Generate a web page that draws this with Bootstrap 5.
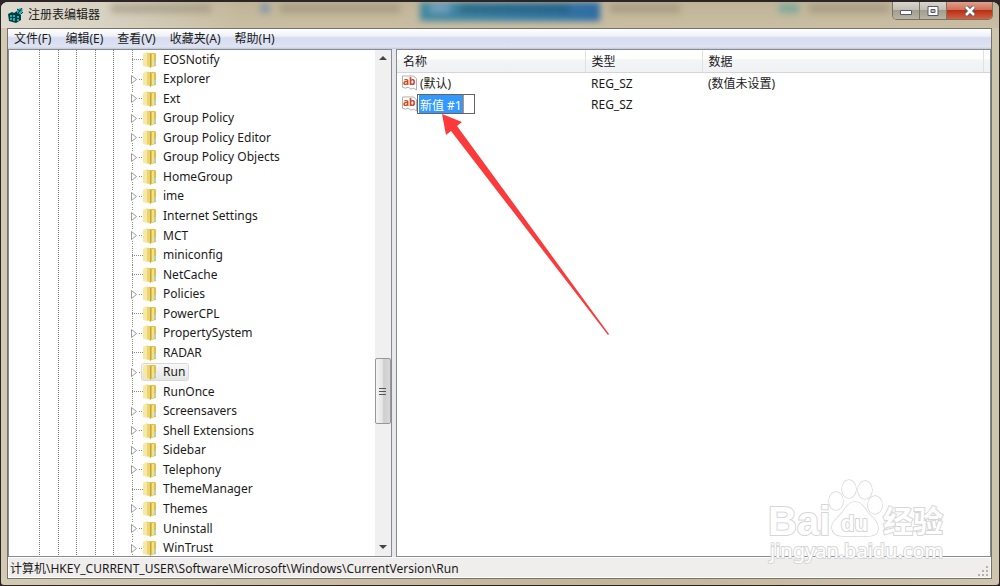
<!DOCTYPE html>
<html lang="zh-CN">
<head>
<meta charset="utf-8">
<meta name="viewport" content="width=device-width, initial-scale=1">
<title>注册表编辑器</title>
<link rel="stylesheet" href="https://cdn.jsdelivr.net/npm/bootstrap@5.3.0/dist/css/bootstrap.min.css">
<style>
body{font:12px/16px "Noto Sans","Noto Sans CJK SC",sans-serif;color:#1a1a1a;background:#2b2527}
.app{border:1px solid #2b2527;border-top-width:2px;border-radius:8px 8px 4px 4px;background:linear-gradient(90deg,#d3cab4,#c9bea5 30%,#c2b699 60%,#cfc5ac);overflow:hidden}
.titlebar{height:26px;background:linear-gradient(90deg,#e6e3dccc,#ddd8cacc 10%,#b9ad9200 24%),linear-gradient(#c0b497,#c9bea3)}
.brand{padding-left:7px;gap:4px;height:26px}
.ghosts{filter:blur(3px);height:26px}
.ghosts i{display:block;position:absolute;top:2px;height:9px;background:#92886f;opacity:.5}
.ghosts .tab{top:-6px;height:25px;opacity:1;background:linear-gradient(90deg,#4289a0,#2f6da4)}
.winbtns{border:1px solid #77736b;border-top:0;border-radius:0 0 5px 5px;height:18px;margin-right:6px;overflow:hidden}
.winbtns button{border:0;padding:0;background:linear-gradient(#d9d5cc,#c3beb3 45%,#a39d8f 50%,#b9b3a4);border-right:1px solid #77736b;line-height:0;width:27px}
.winbtns .shut{border:0;width:45px;background:linear-gradient(#e0a08d,#cf7059 45%,#b92f14 50%,#d06243)}
.client{margin:0 7px 6px 6px;border:1px solid #77736b;background:#f0eeed;min-height:0}
.menubar{height:20px;background:linear-gradient(#fff,#eef1f8 35%,#d6dcee 45%,#dfe4f3 90%,#c0c5d6);padding-left:6px;gap:14px}
.menubar a{color:#1a1a1a;text-decoration:none}
.panes{min-height:0;gap:4px;background:#e8e8ec}
.pane{background:#fff;border:1px solid #868b96;min-width:0;min-height:0}
.tree-pane{width:384px;overflow:hidden}
.tree{margin:0 0 -2px;padding:0;list-style:none;background:repeating-linear-gradient(#0000 0 1px,#fff 1px 2px),linear-gradient(90deg,#0000 30px,#777 30px 31px,#0000 31px 49px,#777 49px 50px,#0000 50px 67px,#777 67px 68px,#0000 68px 86px,#777 86px 87px,#0000 87px 104px,#777 104px 105px,#0000 105px)}
.tree li{padding-left:122px;flex:1 1 0;min-height:0}
.tree svg{flex:none}
.node{border:1px solid #0000;border-radius:3px;margin-left:-16px;padding:0 3px 0 21px}
.node.sel{background:linear-gradient(#f8f8f8,#e5e5e5);border-color:#d9d9d9}
.tree .folder{position:relative;z-index:1}
.sbar{width:16px;background:#f0f0f0}
.sbar button{border:0;padding:0;background:none;height:17px;line-height:0}
.thumb{flex:0 0 66px;border:1px solid #979797;border-radius:2px;background:linear-gradient(90deg,#f5f5f5,#e5e5e5 45%,#cfcfcf 55%,#d8d8d8)}
.before{flex:291 1 0}.after{flex:115 1 0}
.values{width:100%;table-layout:fixed}
.values th{font-weight:400;height:22px;padding:3px 6px 0;border-right:1px solid #dfe1e4;border-bottom:1px solid #d5d5d5;background:linear-gradient(#fff 40%,#f3f4f6 45%,#f0f1f3)}
.values td{height:21px;padding:3px 6px 0}
.values td:first-child{padding:1px 0 0 5px}
.vname{padding:2px 0 0 3px}
.edit{width:58px;height:20px;border:1px solid #646464;padding:1px 1px 0 2px;color:#fff;outline:0;background:linear-gradient(90deg,#fff 1px,#3399ff 1px 45px,#d98b4a 45px 46px,#fff 46px);font:inherit}
.status{height:21px;padding:2px 1px 0;border:1px solid #fff}
.arrow{position:absolute;left:441px;top:112px;pointer-events:none}
.wm{position:absolute;right:50px;bottom:16px;pointer-events:none}
</style>
</head>
<body class="m-0">
<div class="app d-flex flex-column vh-100 position-relative">
<header class="titlebar d-flex position-relative">
<div class="ghosts position-absolute w-100 overflow-hidden"><i style="left:11%;width:10%"></i><i style="left:26%;width:1%;background:#4a7fb5"></i><i style="left:28%;width:12%"></i><i class="tab" style="left:42%;width:18%"></i><i style="left:43%;width:2%;background:#a5b6d6"></i><i style="left:46%;width:11%;background:#1c5670"></i><i style="left:61%;width:7%"></i><i style="left:78%;width:2%;background:#3e9d99"></i><i style="left:81%;width:8%"></i></div>
<div class="brand d-flex align-items-center position-relative">
<svg width="16" height="16" viewBox="0 0 16 16"><path d="M0 7l4-2 2 1 3-2 4 4v5l-5 3-7-2z" fill="#063c40"/><path d="M2 8h2v2H2zm3 0h2v2H5zm-3 3h2v2H2zm3 0h2v3H5zm4-2h2v2H9zm0 3h2v2H9zM9 3l3-2 3 2-2 4-4-1z" fill="#18b5b8"/><path d="M9 2l3 2M14 1l-2 3M13 7l2-2M10 6l2-2" stroke="#083538"/></svg>
<span>注册表编辑器</span></div>
<div class="winbtns d-flex ms-auto position-relative">
<button type="button" aria-label="最小化"><svg width="12" height="12"><path d="M.5 5.500h11v4H.5z" fill="#fff" stroke="#555a68"/></svg></button>
<button type="button" aria-label="最大化"><svg width="12" height="12"><path d="M1 1.500h10v9H1z" fill="#fff" stroke="#555a68"/><path d="M4 4.500h4v3H4z" fill="#bbb" stroke="#555a68"/></svg></button>
<button type="button" class="shut" aria-label="关闭"><svg width="12" height="12"><path d="M2 2l8 8M10 2l-8 8" stroke="#555a68" stroke-width="4.500"/><path d="M2 2l8 8M10 2l-8 8" stroke="#fff" stroke-width="2.500"/></svg></button>
</div>
</header>
<main class="client d-flex flex-column flex-fill">
<nav class="menubar d-flex align-items-center flex-shrink-0"><a href="#">文件(F)</a><a href="#">编辑(E)</a><a href="#">查看(V)</a><a href="#">收藏夹(A)</a><a href="#">帮助(H)</a></nav>
<div class="panes d-flex flex-fill">
<section class="pane tree-pane d-flex flex-shrink-0">
<ul class="tree d-flex flex-column flex-fill" id="tree"></ul>
<div class="sbar d-flex flex-column">
<button type="button" aria-label="向上"><svg width="8" height="5"><path d="M0 4l4-4 4 4z" fill="#444"/></svg></button>
<div class="before"></div><div class="thumb d-flex align-items-center justify-content-center"><svg width="8" height="9"><path d="M0 1.500h7M0 4.500h7M0 7.500h7" stroke="#555"/></svg></div><div class="after"></div>
<button type="button" aria-label="向下"><svg width="8" height="5"><path d="M0 0l4 4 4-4z" fill="#444"/></svg></button>
</div>
</section>
<section class="pane flex-fill">
<table class="values">
<colgroup><col style="width:188px"><col style="width:117px"><col><col style="width:7px"></colgroup>
<thead><tr><th>名称</th><th>类型</th><th>数据</th><th class="p-0 border-end-0"></th></tr></thead>
<tbody class="align-middle">
<tr><td><div class="d-flex align-items-center"><svg width="15" height="16"><use href="#ab"/></svg><span class="vname">(默认)</span></div></td><td>REG_SZ</td><td>(数值未设置)</td><td></td></tr>
<tr><td><div class="d-flex align-items-center"><svg width="15" height="16"><use href="#ab"/></svg><input class="edit" aria-label="名称" value="新值 #1"></div></td><td>REG_SZ</td><td></td><td></td></tr>
</tbody></table>
</section>
</div>
<footer class="status d-flex align-items-center flex-shrink-0"><span>计算机\HKEY_CURRENT_USER\Software\Microsoft\Windows\CurrentVersion\Run</span>
<svg class="ms-auto align-self-end" width="12" height="12"><path d="M9 2h2M9 6h2M9 10h2M5 6h2M5 10h2M1 10h2" stroke="#b5b2b0" stroke-width="2"/></svg></footer>
</main>
<svg class="arrow" width="170" height="224" viewBox="0 0 170 224"><path d="M0 0L20 8 15 12 167 220 166 221 9 17 4 21z" fill="#fb3b3b"/></svg>
<svg class="wm" width="184" height="93" fill="#fff" stroke="#d6d6d6" stroke-width="2" paint-order="stroke">
<text x="3" y="59" font-size="40" font-family="Liberation Sans" font-weight="700">Bai</text>
<g stroke-width="1.500"><ellipse cx="71" cy="25" rx="7" ry="9"/><ellipse cx="84" cy="13" rx="7" ry="9"/><ellipse cx="100" cy="14" rx="7" ry="9"/><ellipse cx="110" cy="29" rx="7" ry="9"/>
<path d="M90 26c6 0 9 5 13 11 6 6 10 9 10 15 0 8-7 8-12 8H79c-6 0-12-2-12-9 0-6 6-9 10-14 4-6 7-11 13-11z"/></g>
<text x="76" y="55" font-size="22" font-family="Liberation Sans" font-weight="700">du</text>
<text x="118" y="56" font-size="30" font-family="Noto Sans CJK SC" font-weight="700">经验</text>
<text x="5" y="82" font-size="20" font-family="Noto Sans">jingyan.baidu.com</text>
</svg>
</div>
<svg width="0" height="0" class="position-absolute"><defs>
<symbol id="ab" viewBox="0 0 16 16"><path d="M.5.500h12l3 3v12l-3-2-3 1-3-2-3 1-3-1z" fill="#fff" stroke="#aaa"/><text x="1" y="10" font-family="Noto Sans" font-weight="700" font-size="11" fill="#cf4520">ab</text></symbol>
<symbol id="fold" viewBox="0 0 14 16"><path d="M0 2l4-2 1 1v14l-5-1z" fill="#f6e9a4"/><path d="M5 1l7 0 1 1v12l-5 1z" fill="#e0c04c"/><path d="M4 1l4 1v14l-4-2z" fill="#ead374"/><path d="M7 2l1 0v14l-1-1z" fill="#c4a644"/><path d="M9 2h2v12H9z" fill="#f5e284"/><path d="M11 9h2v4h-2z" fill="#a8d5cf"/></symbol>
</defs></svg>
<script>
const leaf=new Set(['EOSNotify','miniconfig','NetCache','PowerCPL','RADAR','RunOnce','ThemeManager']);
document.getElementById('tree').innerHTML=['EOSNotify','Explorer','Ext','Group Policy','Group Policy Editor','Group Policy Objects','HomeGroup','ime','Internet Settings','MCT','miniconfig','NetCache','Policies','PowerCPL','PropertySystem','RADAR','Run','RunOnce','Screensavers','Shell Extensions','Sidebar','Telephony','ThemeManager','Themes','Uninstall','WinTrust'].map(n=>`<li class="d-flex align-items-center"><svg width="12" height="19" viewBox="0 0 12 19">${leaf.has(n)?'<path d="M1.500 0v19M1 9.500h11" stroke="#888" stroke-dasharray="1 1"/>':'<path d="M1.500 0v4M1.500 15v4M8 9.500h4" stroke="#888" stroke-dasharray="1 1"/><path d="M.5 5.500l5 4-5 4z" fill="#fff" stroke="#999"/>'}</svg><svg class="folder" width="14" height="16"><use href="#fold"/></svg><span class="node${n==='Run'?' sel':''}">${n}</span></li>`).join('');
</script>
<script src="https://cdn.jsdelivr.net/npm/bootstrap@5.3.0/dist/js/bootstrap.bundle.min.js"></script>
</body>
</html>
